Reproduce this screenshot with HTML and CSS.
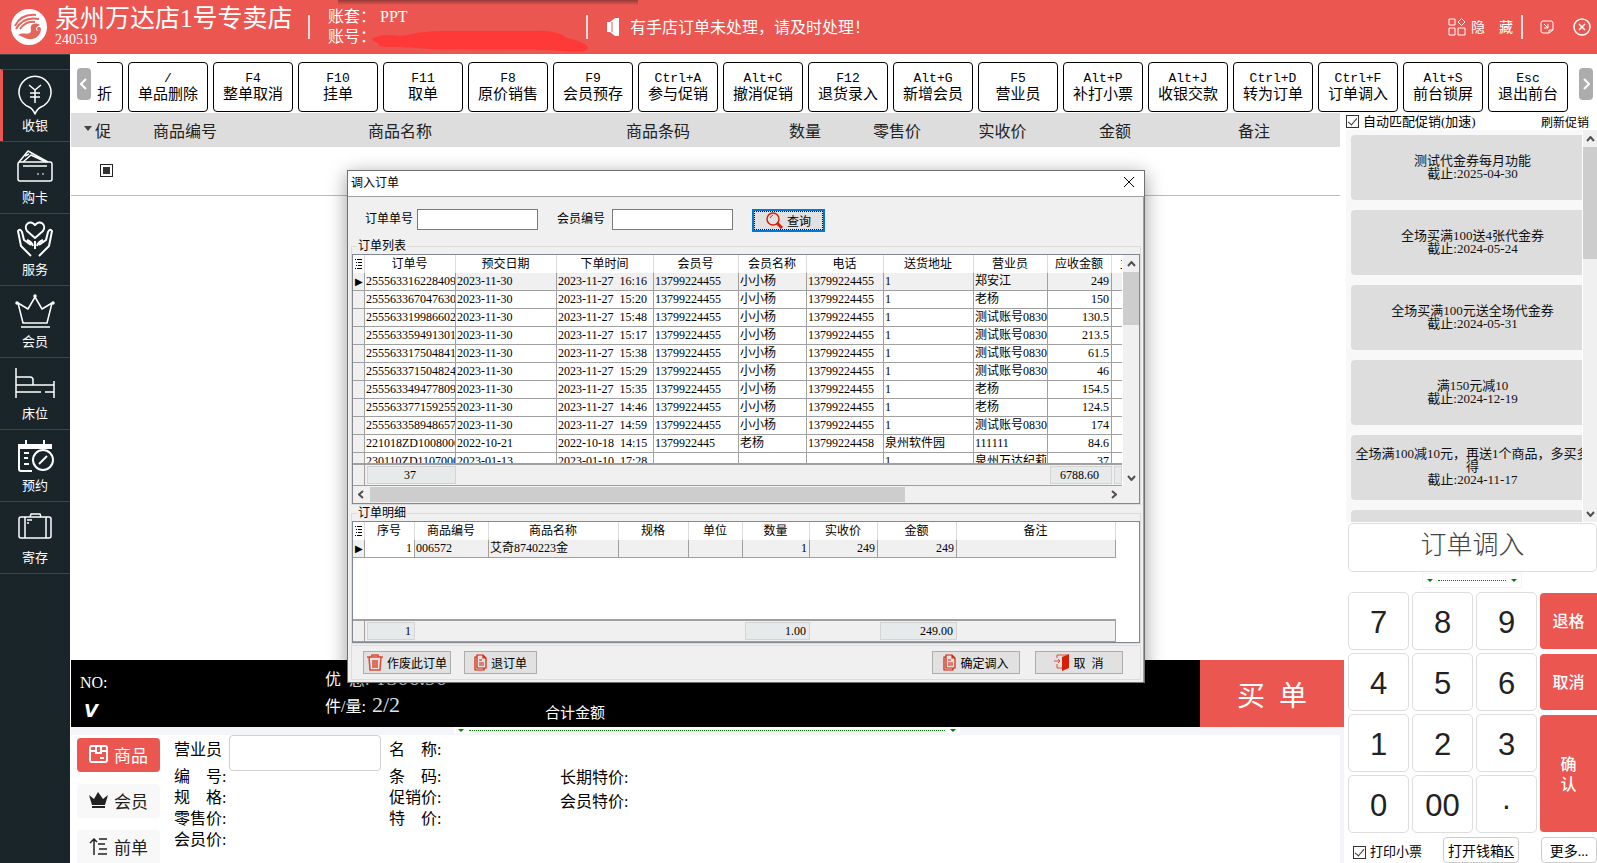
FILE: index.html
```html
<!DOCTYPE html>
<html lang="zh-CN">
  <head>
    <meta charset="UTF-8" />
    <meta name="viewport" content="width=device-width, initial-scale=1.0" />
    <title>前台收银</title>
    <link rel="stylesheet" href="styles.css">
  </head>
  <body>
    <header class="header">
      <svg class="logo" viewBox="0 0 36 36">
        <circle cx="18" cy="18" r="18" fill="#fff" />
        <g fill="none" stroke="#e4655c" stroke-width="2">
          <path d="M4 17C8 9 15 5 25 6" />
          <path d="M5 20C10 11 17 8 28 10" />
          <path d="M9 20C14 13 19 12 24 13" />
        </g>
        <path d="M7 26C12 23 15 26 19 24C21 22 19 20 20 17C22 14 26 14 29 16C27 17 25 18 25 20C25 22 28 23 30 21C29 27 24 31 17 30C12 29 11 27 7 26Z" fill="#e4655c" />
        <circle cx="28" cy="20" r="2" fill="#e4655c" />
      </svg>
      <div class="shop">
        <h1>泉州万达店1号专卖店</h1>
        <p>240519</p>
      </div>
      <div class="account">
        <p>账套： PPT</p>
        <p>账号：</p>
        <svg class="smudge" viewBox="0 0 217 22">
          <path d="M5 7C15 2 28 8 40 4C58 0 80 1 105 1L160 1C180 0 190 3 196 8C208 11 217 14 217 18C216 23 205 22 190 21C150 17 120 21 90 19C60 21 35 16 14 17C6 17 9 14 5 12C0 11 0 8 5 7Z" fill="#ff3838" />
        </svg>
      </div>
      <div class="notice">
        <svg width="12" height="18" viewBox="0 0 12 18"><path d="M0 4h3l5-4h4v18H8l-5-4H0z" fill="#fff" /><path d="M5 4v10" stroke="#eb5651" /></svg>
        <span>有手店订单未处理，请及时处理！</span>
      </div>
      <div class="header-tools">
        <button class="hide-btn">
          <svg width="18" height="18" viewBox="0 0 18 18" fill="none" stroke="currentColor"><path d="M1 1h6v6H1zM1 10h6v7H1zM10 10h7v7h-7zM13.500 .5l3.500 3.500-3.500 3.500L10 4z" /></svg>
          <span>隐</span><span>藏</span>
        </button>
        <button class="icon-btn" aria-label="最小化">
          <svg width="14" height="14" viewBox="0 0 14 14" fill="none" stroke="currentColor"><path d="M9 13H3a2 2 0 0 1-2-2V3a2 2 0 0 1 2-2h8a2 2 0 0 1 2 2v7L9 13V10h4M4 4l4 4M8 4v4H4" /></svg>
        </button>
        <button class="icon-btn" aria-label="关闭">
          <svg width="18" height="18" viewBox="0 0 18 18" fill="none" stroke="currentColor" stroke-width="1.500"><circle cx="9" cy="9" r="8" /><path d="M6 6l6 6M12 6l-6 6" /></svg>
        </button>
      </div>
    </header>

    <div class="app">
      <nav class="sidebar">
        <a href="#" class="active">
          <svg viewBox="0 0 40 40"><path d="M14 32Q18 34 20 39Q22 34 26 32A16 16 0 1 0 14 32Z" /><path d="M14 10l6 5 6-5M15 18h10M15 22h10M20 15v13" /></svg>
          <span>收银</span>
        </a>
        <a href="#">
          <svg viewBox="0 0 40 40"><rect x="3" y="15" width="34" height="19" rx="2" /><path d="M8 19h24M4 15L13 4l20 11M8 15L16 8l15 7M10 9l4-2" /><path d="M22 27h2M27 27h2" stroke-width="1" /></svg>
          <span>购卡</span>
        </a>
        <a href="#">
          <svg viewBox="0 0 40 40" class="bold"><path d="M20 19L12 12C8 6 15 0 20 6C25 0 32 6 28 12Z" /><path d="M16 37L6 27 3 12q2-3 4 1l2 8 7 5M12 21q5 2 6 6M24 37l10-10 3-15q-2-3-4 1l-2 8-7 5M28 21q-5 2-6 6M20 22v8" /></svg>
          <span>服务</span>
        </a>
        <a href="#">
          <svg viewBox="0 0 40 40"><path d="M3 12l5 20h24l5-20-10 6-7-12-7 12zM6 36h29" /><g fill="#fff"><circle cx="20" cy="5" r="1" /><circle cx="2" cy="12" r="1" /><circle cx="38" cy="12" r="1" /></g></svg>
          <span>会员</span>
        </a>
        <a href="#">
          <svg viewBox="0 0 40 40"><path d="M1 5v30M1 14h14q3 0 3 3v5M1 22h38M39 18v17M1 29h25M30 29h9" /></svg>
          <span>床位</span>
        </a>
        <a href="#">
          <svg viewBox="0 0 40 40" class="bold"><path d="M3 9h34v5H3z" fill="#fff" stroke="none" /><path d="M17 36H6q-2 0-2-2V10M11 5v6M29 5v6M9 18h5M9 23h4M9 29h5" /><circle cx="28" cy="25" r="10" fill="#1a252a" /><path d="M24 29l8-8" /></svg>
          <span>预约</span>
        </a>
        <a href="#">
          <svg viewBox="0 0 40 40"><rect x="4" y="10" width="32" height="21" rx="2" /><path d="M15 10l1-3h9l1 3M10 10v21M31 10v21M12 13h5M12 16h2" /></svg>
          <span>寄存</span>
        </a>
      </nav>

      <div class="workspace">
        <div class="toolbar">
          <button class="scroll-btn" aria-label="向左"><svg width="8" height="12" viewBox="0 0 8 12"><path d="M6 1L1 6l5 5" /></svg></button>
          <div class="shortcuts">
            <button class="cut">折</button>
            <button><kbd>/</kbd>单品删除</button>
            <button><kbd>F4</kbd>整单取消</button>
            <button><kbd>F10</kbd>挂单</button>
            <button><kbd>F11</kbd>取单</button>
            <button><kbd>F8</kbd>原价销售</button>
            <button><kbd>F9</kbd>会员预存</button>
            <button><kbd>Ctrl+A</kbd>参与促销</button>
            <button><kbd>Alt+C</kbd>撤消促销</button>
            <button><kbd>F12</kbd>退货录入</button>
            <button><kbd>Alt+G</kbd>新增会员</button>
            <button><kbd>F5</kbd>营业员</button>
            <button><kbd>Alt+P</kbd>补打小票</button>
            <button><kbd>Alt+J</kbd>收银交款</button>
            <button><kbd>Ctrl+D</kbd>转为订单</button>
            <button><kbd>Ctrl+F</kbd>订单调入</button>
            <button><kbd>Alt+S</kbd>前台锁屏</button>
            <button><kbd>Esc</kbd>退出前台</button>
          </div>
          <button class="scroll-btn" aria-label="向右"><svg width="8" height="12" viewBox="0 0 8 12"><path d="M2 1l5 5-5 5" /></svg></button>
        </div>

        <div class="columns">
          <main class="main">
            <div class="goods">
              <table class="goods-table">
                <colgroup>
                  <col class="w56"><col class="w116"><col class="w314"><col class="w202"><col class="w92"><col class="w92"><col class="w119"><col class="w106"><col>
                </colgroup>
                <thead>
                  <tr>
                    <th class="promo-col"><svg width="8" height="5" viewBox="0 0 8 5"><path d="M0 0h8L4 5z" fill="#444" /></svg>促</th>
                    <th>商品编号</th>
                    <th>商品名称</th>
                    <th>商品条码</th>
                    <th>数量</th>
                    <th>零售价</th>
                    <th>实收价</th>
                    <th>金额</th>
                    <th>备注</th>
                  </tr>
                </thead>
                <tbody>
                  <tr>
                    <td class="mark"><span></span></td>
                    <td></td><td></td><td></td><td></td><td></td><td></td><td></td><td></td>
                  </tr>
                </tbody>
              </table>
            </div>

            <div class="totals">
              <div class="totals-info">
                <div class="bill-no">
                  <p>NO:</p>
                  <p class="vip">V</p>
                </div>
                <div class="sums">
                  <p>优&ensp;惠:<b>¥306.90</b></p>
                  <p>件/量:<b>2/2</b></p>
                </div>
                <p class="total-label">合计金额</p>
              </div>
              <button class="pay">买&ensp;单</button>
            </div>

            <div class="splitter"><div class="grip"><i></i><span></span><i></i></div></div>

            <div class="detail">
              <div class="tabs">
                <button class="on">
                  <svg width="19" height="18" viewBox="0 0 19 18" fill="none" stroke="currentColor" stroke-width="2"><path d="M1 3q0-2 2-2h13q2 0 2 2v12q0 2-2 2H3q-2 0-2-2zM7 1v7h5V1M1 6h5M13 6h5M11 13h4" /></svg>
                  商品
                </button>
                <button>
                  <svg width="19" height="18" viewBox="0 0 19 18"><path d="M0 4l5 4 4-7 5 7 5-4-3 10H3zM3 15h13v2H3z" fill="#222" /></svg>
                  会员
                </button>
                <button>
                  <svg width="19" height="18" viewBox="0 0 19 18" fill="none" stroke="#222" stroke-width="1.500"><path d="M5 18V2M1 6l4-4 3 3M10 2h8M9 7h7M10 12h8M9 17h9" /></svg>
                  前单
                </button>
              </div>
              <div class="info info-a">
                <div class="clerk">
                  <label for="clerk">营业员</label>
                  <input id="clerk" type="text">
                </div>
                <p>编　号:</p>
                <p>规　格:</p>
                <p>零售价:</p>
                <p>会员价:</p>
              </div>
              <div class="info info-b">
                <p>名　称:</p>
                <p>条　码:</p>
                <p>促销价:</p>
                <p>特　价:</p>
              </div>
              <div class="info info-c">
                <p>长期特价:</p>
                <p>会员特价:</p>
              </div>
            </div>
          </main>

          <aside class="side">
            <div class="promo-head">
              <label><input type="checkbox" class="check" checked>自动匹配促销(加速)</label>
              <a href="#">刷新促销</a>
            </div>
            <div class="promo-list">
              <div class="promo-cards">
                <button>测试代金券每月功能<br>截止:2025-04-30</button>
                <button>全场买满100送4张代金券<br>截止:2024-05-24</button>
                <button>全场买满100元送全场代金券<br>截止:2024-05-31</button>
                <button>满150元减10<br>截止:2024-12-19</button>
                <button>全场满100减10元，再送1个商品，多买多得<br>截止:2024-11-17</button>
                <button></button>
              </div>
              <div class="vbar">
                <svg viewBox="0 0 9 6"><path d="M1 5l3.500-4L8 5" /></svg>
                <div class="thumb promo-thumb"></div>
                <svg class="last" viewBox="0 0 9 6"><path d="M1 1l3.500 4L8 1" /></svg>
              </div>
            </div>
            <button class="mode">订单调入</button>
            <div class="grip small"><i></i><span></span><i></i></div>
            <div class="keypad">
              <button>7</button><button>8</button><button>9</button><button class="red">退格</button>
              <button>4</button><button>5</button><button>6</button><button class="red">取消</button>
              <button>1</button><button>2</button><button>3</button><button class="red tall">确<br>认</button>
              <button>0</button><button>00</button><button>·</button>
            </div>
            <div class="side-foot">
              <label><input type="checkbox" class="check" checked>打印小票</label>
              <button>打开钱箱<u>K</u></button>
              <button class="more">更多...</button>
            </div>
          </aside>
        </div>
      </div>
    </div>

    <div class="dialog" role="dialog" aria-label="调入订单">
      <div class="dialog-title">
        <h2>调入订单</h2>
        <button aria-label="关闭"><svg width="12" height="12" viewBox="0 0 12 12"><path d="M1 1l10 10M11 1L1 11" stroke="#000" /></svg></button>
      </div>
      <div class="dialog-body">
        <form class="search">
          <label for="order-no">订单单号</label>
          <input id="order-no" type="text">
          <label for="member-no" class="member">会员编号</label>
          <input id="member-no" type="text">
          <button type="button" class="btn focus">
            <svg width="17" height="17" viewBox="0 0 17 17" fill="none" stroke="#d81e06"><circle cx="7" cy="7" r="6" stroke-width="1.500" /><path d="M4 6q1-2 3-3" /><path d="M11 11l5 5" stroke-width="3" /></svg>
            查询
          </button>
        </form>

        <fieldset>
          <legend>订单列表</legend>
          <div class="frame orders">
            <div class="orders-view">
              <div class="orders-rows">
                <table class="data">
                  <colgroup><col class="w12"><col class="w91"><col class="w101"><col class="w97"><col class="w85"><col class="w68"><col class="w77"><col class="w90"><col class="w74"><col class="w64"><col></colgroup>
                  <thead>
                    <tr><th class="menu"><svg width="7" height="10" viewBox="0 0 7 10"><path d="M0 .5h1M2 .5h5M1 3.500h1M3 3.500h4M1 6.500h1M3 6.500h4M0 9.500h1M2 9.500h5" stroke="#000" /></svg></th><th>订单号</th><th>预交日期</th><th>下单时间</th><th>会员号</th><th>会员名称</th><th>电话</th><th>送货地址</th><th>营业员</th><th>应收金额</th><th class="part">主</th></tr>
                  </thead>
                  <tbody>
                    <tr class="selected"><td class="arrow">▶</td><td class="current">255563316228409</td><td>2023-11-30</td><td>2023-11-27&ensp;16:16</td><td>13799224455</td><td>小小杨</td><td>13799224455</td><td>1</td><td>郑安江</td><td class="num">249</td><td></td></tr>
                    <tr><td></td><td>255563367047630</td><td>2023-11-30</td><td>2023-11-27&ensp;15:20</td><td>13799224455</td><td>小小杨</td><td>13799224455</td><td>1</td><td>老杨</td><td class="num">150</td><td></td></tr>
                    <tr><td></td><td>255563319986602</td><td>2023-11-30</td><td>2023-11-27&ensp;15:48</td><td>13799224455</td><td>小小杨</td><td>13799224455</td><td>1</td><td>测试账号0830</td><td class="num">130.5</td><td></td></tr>
                    <tr><td></td><td>255563359491301</td><td>2023-11-30</td><td>2023-11-27&ensp;15:17</td><td>13799224455</td><td>小小杨</td><td>13799224455</td><td>1</td><td>测试账号0830</td><td class="num">213.5</td><td></td></tr>
                    <tr><td></td><td>255563317504841</td><td>2023-11-30</td><td>2023-11-27&ensp;15:38</td><td>13799224455</td><td>小小杨</td><td>13799224455</td><td>1</td><td>测试账号0830</td><td class="num">61.5</td><td></td></tr>
                    <tr><td></td><td>255563371504824</td><td>2023-11-30</td><td>2023-11-27&ensp;15:29</td><td>13799224455</td><td>小小杨</td><td>13799224455</td><td>1</td><td>测试账号0830</td><td class="num">46</td><td></td></tr>
                    <tr><td></td><td>255563349477809</td><td>2023-11-30</td><td>2023-11-27&ensp;15:35</td><td>13799224455</td><td>小小杨</td><td>13799224455</td><td>1</td><td>老杨</td><td class="num">154.5</td><td></td></tr>
                    <tr><td></td><td>255563377159255</td><td>2023-11-30</td><td>2023-11-27&ensp;14:46</td><td>13799224455</td><td>小小杨</td><td>13799224455</td><td>1</td><td>老杨</td><td class="num">124.5</td><td></td></tr>
                    <tr><td></td><td>255563358948657</td><td>2023-11-30</td><td>2023-11-27&ensp;14:59</td><td>13799224455</td><td>小小杨</td><td>13799224455</td><td>1</td><td>测试账号0830</td><td class="num">174</td><td></td></tr>
                    <tr><td></td><td>221018ZD1008000</td><td>2022-10-21</td><td>2022-10-18&ensp;14:15</td><td>1379922445</td><td>老杨</td><td>13799224458</td><td>泉州软件园</td><td>111111</td><td class="num">84.6</td><td></td></tr>
                    <tr><td></td><td>230110ZD1107000</td><td>2023-01-13</td><td>2023-01-10&ensp;17:28</td><td></td><td></td><td></td><td>1</td><td>泉州万达纪莉</td><td class="num">37</td><td></td></tr>
                  </tbody>
                </table>
              </div>
              <table class="data sum">
                <colgroup><col class="w12"><col class="w91"><col class="w592"><col class="w64"><col></colgroup>
                <tbody>
                  <tr><td></td><td><span class="center">37</span></td><td></td><td><span class="center">6788.60</span></td><td><span></span></td></tr>
                </tbody>
              </table>
            </div>
            <div class="vbar">
              <svg viewBox="0 0 9 6"><path d="M1 5l3.500-4L8 5" /></svg>
              <div class="thumb orders-thumb"></div>
              <svg class="last" viewBox="0 0 9 6"><path d="M1 1l3.500 4L8 1" /></svg>
            </div>
            <div class="hbar">
              <svg viewBox="0 0 6 9"><path d="M5 1L1 4.500 5 8" /></svg>
              <div class="thumb wide-thumb"></div>
              <svg class="last" viewBox="0 0 6 9"><path d="M1 1l4 3.500L1 8" /></svg>
            </div>
          </div>
        </fieldset>

        <fieldset>
          <legend>订单明细</legend>
          <div class="frame lines">
            <table class="data">
              <colgroup><col class="w12"><col class="w50"><col class="w74"><col class="w130"><col class="w70"><col class="w54"><col class="w67"><col class="w68"><col class="w79"><col></colgroup>
              <thead>
                <tr><th class="menu"><svg width="7" height="10" viewBox="0 0 7 10"><path d="M0 .5h1M2 .5h5M1 3.500h1M3 3.500h4M1 6.500h1M3 6.500h4M0 9.500h1M2 9.500h5" stroke="#000" /></svg></th><th>序号</th><th>商品编号</th><th>商品名称</th><th>规格</th><th>单位</th><th>数量</th><th>实收价</th><th>金额</th><th>备注</th></tr>
              </thead>
              <tbody>
                <tr class="selected"><td class="arrow">▶</td><td class="num current">1</td><td>006572</td><td>艾奇8740223金</td><td></td><td></td><td class="num">1</td><td class="num">249</td><td class="num">249</td><td></td></tr>
              </tbody>
            </table>
            <table class="data sum">
              <colgroup><col class="w12"><col class="w50"><col class="w328"><col class="w67"><col class="w68"><col class="w79"><col></colgroup>
              <tbody>
                <tr><td></td><td><span>1</span></td><td></td><td><span>1.00</span></td><td></td><td><span>249.00</span></td><td></td></tr>
              </tbody>
            </table>
          </div>
        </fieldset>

        <div class="actions">
          <button class="btn">
            <svg width="16" height="17" viewBox="0 0 16 17" fill="none" stroke="#dc4a35" stroke-width="1.500"><path d="M0 3h16M4 3l1-2h6l1 2M2 3l1 13h10l1-13M6 6v8M8 6v8M10 6v8" /></svg>
            作废此订单
          </button>
          <button class="btn narrow">
            <svg width="13" height="17" viewBox="0 0 13 17" fill="none" stroke="#d81e06" stroke-width="1.200"><path d="M3 1h6l3 3v10H3zM9 1v3h3M3 3H1v13h9v-2M5 6h3M5 9h5M5 11h5" /></svg>
            退订单
          </button>
          <button class="btn confirm">
            <svg width="13" height="17" viewBox="0 0 13 17" fill="none" stroke="#d81e06" stroke-width="1.200"><path d="M3 1h6l3 3v10H3zM9 1v3h3M3 3H1v13h9v-2M5 6h3M5 9h5M5 11h5" /></svg>
            确定调入
          </button>
          <button class="btn">
            <svg width="15" height="17" viewBox="0 0 15 17"><path d="M8 3l7-3v14l-7 3z" fill="#d81e06" /><path d="M3 4V1h11M3 10v4h5M0 7h6M4 5l2 2-2 2" fill="none" stroke="#dc4a35" /></svg>
            取&ensp;消
          </button>
        </div>
      </div>
    </div>
  </body>
</html>
```

FILE: styles.css
```css
* {
  box-sizing: border-box;
}

body {
  margin: 0;
  height: 100vh;
  overflow: hidden;
  display: flex;
  flex-direction: column;
  background-color: #fff;
  color: #000;
  font-family: "Liberation Serif", "Noto Sans CJK SC", serif;
  font-size: 12px;
}

h1,
h2,
p {
  margin: 0;
  font-weight: normal;
}

button,
input {
  font-family: inherit;
  font-size: inherit;
  color: inherit;
  margin: 0;
}

button {
  padding: 0;
  border: none;
  background: none;
  cursor: pointer;
}

a {
  color: inherit;
  text-decoration: none;
}

svg {
  flex: none;
}

/* Top bar */
.header {
  height: 54px;
  flex: none;
  display: flex;
  align-items: center;
  padding: 0 6px 0 11px;
  background: linear-gradient(rgba(60, 30, 30, 0.5), rgba(60, 30, 30, 0)) 338px 0 / 300px 5px no-repeat #eb5651;
  color: #fff;
}

.logo {
  width: 36px;
  height: 36px;
}

.shop {
  width: 263px;
  padding-left: 8px;
  border-right: 2px solid #fbdcda;
  height: 24px;
  display: flex;
  flex-direction: column;
  justify-content: center;
  white-space: nowrap;
}

.shop h1 {
  font-size: 25px;
  line-height: 26px;
}

.shop p {
  font-size: 14px;
  line-height: 16px;
}

.account {
  position: relative;
  width: 278px;
  height: 24px;
  padding-left: 18px;
  border-right: 2px solid #fbdcda;
  display: flex;
  flex-direction: column;
  justify-content: center;
  font-size: 16px;
  line-height: 20px;
}

.account p {
  flex: none;
}

/* Painted over the account number */
.smudge {
  position: absolute;
  left: 61px;
  top: 15px;
  width: 217px;
  height: 22px;
}

.notice {
  display: flex;
  align-items: center;
  gap: 11px;
  padding-left: 19px;
  font-size: 16px;
}

.notice span {
  padding-bottom: 3px;
}

.header-tools {
  margin-left: auto;
  display: flex;
  align-items: center;
  gap: 17px;
}

.hide-btn {
  display: flex;
  align-items: center;
  height: 24px;
  padding-right: 8px;
  border-right: 2px solid #fbdcda;
  font-size: 14px;
}

.hide-btn span {
  padding-bottom: 2px;
}

.hide-btn span:first-of-type {
  margin: 0 14px 0 5px;
}

.icon-btn {
  display: flex;
}

.icon-btn:last-child {
  margin-left: 2px;
}

/* Left navigation */
.app {
  flex: 1;
  min-height: 0;
  display: flex;
}

.sidebar {
  width: 70px;
  flex: none;
  padding-top: 14px;
  background-color: #1a252a;
  border-top: 1px solid #39464b;
  color: #fff;
}

.sidebar a {
  height: 72px;
  display: flex;
  flex-direction: column;
  align-items: center;
  padding-top: 5px;
  border-top: 1px solid #39464b;
}

.sidebar a:last-child {
  height: 73px;
  border-bottom: 1px solid #39464b;
}

.sidebar .active {
  border-left: 3px solid #eb5651;
  padding-right: 3px;
}

.sidebar svg {
  width: 40px;
  height: 40px;
  fill: none;
  stroke: #fff;
  stroke-width: 1.5;
  stroke-linejoin: round;
}

.sidebar .bold {
  stroke-width: 2;
}

.sidebar span {
  font-size: 13px;
  line-height: 22px;
}

.workspace {
  flex: 1;
  min-width: 0;
  display: flex;
  flex-direction: column;
  padding-left: 1px;
}

/* Shortcut buttons */
.toolbar {
  flex: none;
  display: flex;
  padding: 8px 4px 1px 6px;
}

.scroll-btn {
  width: 14px;
  height: 32px;
  margin-top: 6px;
  flex: none;
  border-radius: 4px;
  background-color: #acacac;
  display: flex;
  align-items: center;
  justify-content: center;
}

.scroll-btn path {
  fill: none;
  stroke: #fff;
  stroke-width: 2;
}

.shortcuts {
  flex: 1;
  min-width: 0;
  display: flex;
  justify-content: flex-end;
  gap: 5px;
  overflow: hidden;
  margin: 0 11px 0 6px;
}

.shortcuts button {
  width: 80px;
  height: 50px;
  flex: none;
  border: 1px solid #000;
  border-radius: 4px;
  background-color: #fff;
  font-size: 15px;
  line-height: 16px;
}

.shortcuts kbd {
  display: block;
  font-family: "Liberation Mono", monospace;
  font-size: 13px;
  line-height: 14px;
}

.shortcuts .cut {
  padding: 14px 10px 0 0;
  text-align: right;
}

.columns {
  flex: 1;
  min-height: 0;
  display: flex;
  gap: 2px;
}

.main {
  flex: 1;
  min-width: 0;
  display: flex;
  flex-direction: column;
}

/* Cart */
.goods {
  flex: 1;
  min-height: 0;
  padding-right: 4px;
}

.goods-table {
  width: 100%;
  table-layout: fixed;
  border-collapse: collapse;
  font-family: "Noto Sans CJK SC", sans-serif;
}

.goods-table th {
  height: 34px;
  padding: 0;
  background-color: #ddd;
  color: #222;
  font-size: 16px;
  font-weight: normal;
  line-height: 20px;
}

.goods-table .promo-col {
  text-align: left;
  padding-left: 13px;
}

.promo-col svg {
  margin-right: 3px;
  vertical-align: 6px;
}

.goods-table td {
  height: 48px;
  padding: 0;
  border-bottom: 1px solid #bbb;
}

.goods-table .mark {
  padding-left: 29px;
}

.mark span {
  display: block;
  width: 13px;
  height: 13px;
  border: 1px solid #222;
  padding: 2px;
  background-color: #333;
  background-clip: content-box;
}

/* Bill totals */
.totals {
  flex: none;
  display: flex;
  height: 67px;
}

.totals-info {
  flex: 1;
  display: flex;
  padding-left: 9px;
  background-color: #000;
  color: #fff;
  font-size: 16px;
}

.bill-no {
  width: 245px;
  padding-top: 10px;
  line-height: 26px;
}

.bill-no .vip {
  padding-left: 4px;
  font: italic bold 18px/30px "DejaVu Sans", sans-serif;
}

.sums {
  width: 220px;
  padding-top: 7px;
  white-space: nowrap;
}

.sums p {
  height: 27px;
  line-height: 26px;
}

.sums b {
  padding-left: 6px;
  font-size: 22px;
  font-weight: normal;
  line-height: 22px;
  color: #dde6ee;
}

.total-label {
  padding-top: 42px;
  font-size: 15px;
  line-height: 22px;
}

.pay {
  width: 144px;
  background-color: #eb5651;
  color: #fff;
  font-size: 28px;
}

.splitter {
  flex: none;
  height: 8px;
  padding-left: 383px;
  background-color: #f4f5f8;
}

.grip {
  display: flex;
  align-items: center;
  gap: 5px;
  width: 506px;
  height: 6px;
  padding: 0 4px;
  background-color: #fff;
}

.grip i {
  border: 3px solid transparent;
  border-top-color: green;
  border-bottom: none;
}

.grip span {
  flex: 1;
  border-top: 1px dotted green;
}

.grip.small {
  flex: none;
  width: 100px;
  height: 15px;
  margin: 1px 0 4px 76px;
  border: 1px solid #f4f4f4;
}

/* Item details */
.detail {
  flex: none;
  display: flex;
  height: 128px;
  padding-left: 6px;
  border-right: 4px solid #f4f5f8;
}

.tabs {
  width: 83px;
  flex: none;
  padding-top: 3px;
  display: flex;
  flex-direction: column;
  gap: 12px;
}

.tabs button {
  height: 34px;
  flex: none;
  display: flex;
  align-items: center;
  justify-content: center;
  gap: 6px;
  padding-bottom: 2px;
  border-radius: 4px;
  background-color: #f8f8f8;
  color: #222;
  font-family: "Noto Sans CJK SC", sans-serif;
  font-size: 17px;
}

.tabs .on {
  background-color: #eb5651;
  color: #fff;
}

.info {
  font-size: 16px;
  line-height: 21px;
  white-space: nowrap;
}

.info-a {
  width: 214px;
  padding-left: 14px;
}

.clerk {
  display: flex;
  height: 31px;
}

.clerk label {
  width: 52px;
  flex: none;
  padding-top: 4px;
}

.clerk input {
  width: 152px;
  height: 36px;
  flex: none;
  margin-left: 3px;
  border: 1px solid #d0d0d0;
  border-radius: 4px;
}

.info-b {
  width: 186px;
  padding-left: 15px;
}

.info-b p:first-child {
  padding: 4px 0 6px;
}

.info-c {
  padding-top: 31px;
  line-height: 24px;
}

/* Right column */
.side {
  width: 251px;
  flex: none;
  display: flex;
  flex-direction: column;
}

.promo-head,
.side-foot {
  flex: none;
  display: flex;
  align-items: center;
  white-space: nowrap;
}

.promo-head {
  height: 17px;
  justify-content: space-between;
  padding-right: 8px;
}

.promo-head label,
.side-foot label {
  display: flex;
  align-items: center;
  gap: 4px;
  font-size: 13px;
  line-height: 16px;
}

.check {
  appearance: none;
  width: 13px;
  height: 13px;
  flex: none;
  border: 1px solid #333;
  background-color: #fff;
  display: flex;
  justify-content: center;
}

.check:checked::before {
  content: "";
  width: 4px;
  height: 8px;
  border: solid #333;
  border-width: 0 1px 1px 0;
  transform: rotate(40deg);
}

.promo-list {
  flex: 1;
  min-height: 0;
  display: flex;
  overflow: hidden;
  margin-bottom: 1px;
}

.promo-cards {
  flex: 1;
  min-width: 0;
  overflow: hidden;
  display: flex;
  flex-direction: column;
  gap: 10px;
  padding: 5px 0 0 5px;
  background-color: #f8f8f8;
}

.promo-cards button {
  width: 243px;
  height: 65px;
  flex: none;
  padding-bottom: 2px;
  border-radius: 4px;
  background-color: #ddd;
  color: #111;
  font-size: 13px;
  line-height: 13px;
}

.vbar,
.hbar {
  display: flex;
  align-items: center;
  background-color: #f0f0f0;
}

.vbar {
  width: 15px;
  flex: none;
  flex-direction: column;
  border-left: 1px solid #fff;
}

.vbar svg {
  width: 9px;
  height: 6px;
  margin: 6px 0 5px;
}

.vbar svg,
.hbar svg {
  fill: none;
  stroke: #505050;
  stroke-width: 2;
}

.vbar .last {
  margin-top: auto;
}

.thumb {
  background-color: #cdcdcd;
}

.vbar .thumb {
  width: 100%;
}

.promo-thumb {
  height: 112px;
}

.mode {
  height: 49px;
  flex: none;
  margin-left: 2px;
  padding-bottom: 3px;
  border: 1px solid #ddd;
  border-radius: 5px;
  font-size: 26px;
  font-weight: 300;
  line-height: 36px;
  color: #444;
}

.keypad {
  flex: none;
  display: grid;
  grid-template-columns: 61px 61px 61px 1fr;
  grid-auto-rows: 58px;
  gap: 3px;
  padding-left: 2px;
}

.keypad button {
  padding-top: 4px;
  border: 1px solid #ddd;
  border-radius: 5px;
  background-color: #fff;
  color: #222;
  font-family: "Liberation Sans", sans-serif;
  font-size: 31px;
}

.keypad .red {
  margin: 1px 0;
  padding: 0 0 2px;
  border: none;
  border-radius: 4px 0 0 4px;
  background-color: #eb5651;
  color: #fff;
  font-family: "Noto Sans CJK SC", sans-serif;
  font-size: 16px;
  font-weight: 500;
  line-height: 20px;
}

.keypad .tall {
  grid-row: span 2;
}

.side-foot {
  height: 30px;
  padding-left: 7px;
  align-items: flex-end;
}

.side-foot label {
  width: 90px;
  padding-bottom: 3px;
}

.side-foot button {
  width: 76px;
  height: 26px;
  flex: none;
  border: 1px solid #ccc;
  border-radius: 4px;
  font-size: 14px;
}

.side-foot .more {
  width: 56px;
  margin-left: 22px;
}

/* Order import window */
.dialog {
  position: absolute;
  left: 347px;
  top: 170px;
  width: 798px;
  border: 1px solid #707070;
  background-color: #f0f0f0;
  box-shadow: 0 4px 18px rgba(0, 0, 0, 0.4);
}

.dialog-title {
  height: 26px;
  display: flex;
  align-items: center;
  justify-content: space-between;
  padding: 0 9px 3px 3px;
  background-color: #fff;
  border-bottom: 1px solid #a0a0a0;
}

.dialog-title h2 {
  font-size: 12px;
}

.dialog-title button {
  display: flex;
}

.dialog-body {
  padding: 0 2px 2px 3px;
  border-right: 1px solid #a0a0a0;
}

.search {
  display: flex;
  padding: 12px 0 7px 14px;
}

.search label {
  width: 52px;
  line-height: 21px;
}

.search .member {
  width: 55px;
}

.search input {
  width: 121px;
  height: 21px;
  margin-right: 19px;
  border: 1px solid #7a7a7a;
  background-color: #fff;
}

.btn {
  width: 88px;
  height: 23px;
  display: flex;
  align-items: center;
  justify-content: center;
  gap: 4px;
  border: 1px solid #adadad;
  background-color: #e1e1e1;
  white-space: nowrap;
}

.btn.narrow,
.btn.focus {
  width: 73px;
}

.btn.focus {
  border: 2px solid #0078d7;
  outline: 1px dotted #000;
  outline-offset: -3px;
}

fieldset {
  min-width: 0;
  margin: 0 0 1px;
  padding: 0;
  border: 1px solid #dcdcdc;
}

legend {
  margin-left: 5px;
  padding: 0 1px;
  line-height: 15px;
}

.frame {
  border: 1px solid #828790;
  background-color: #fff;
}

.orders {
  display: grid;
  grid-template-columns: 1fr 17px;
}

.orders-view {
  min-width: 0;
}

.orders-rows {
  height: 208px;
  overflow: hidden;
}

.data {
  width: 100%;
  table-layout: fixed;
  border-collapse: separate;
  border-spacing: 0;
}

.data th,
.data td {
  height: 18px;
  padding: 0 2px 0 1px;
  overflow: hidden;
  white-space: nowrap;
  font-weight: normal;
  line-height: 17px;
}

.data th {
  border-right: 1px solid #dcdcdc;
}

.data th.menu {
  padding: 0;
}

.data th.part {
  padding-left: 8px;
  text-align: left;
}

.menu svg {
  display: block;
  margin: auto;
}

.data td {
  border-right: 1px solid #a0a0a0;
  border-bottom: 1px solid #a0a0a0;
}

.data td:first-child,
.data .selected td {
  background-color: #f0f0f0;
}

.data .selected .current {
  background-color: #fff;
}

.data .num {
  text-align: right;
}

.data .arrow {
  padding: 0 0 0 2px;
  font-family: "DejaVu Sans", sans-serif;
  font-size: 10px;
}

.orders .data th:last-child,
.orders .data td:last-child {
  border-right: none;
}

.sum {
  border-top: 2px solid #a0a0a0;
  background-color: #f0f0f0;
}

.data.sum td {
  height: 21px;
  padding: 1px 0 1px 2px;
  border-right: none;
}

.data.sum td:first-child {
  border-right: 1px solid #a0a0a0;
}

.sum span {
  display: block;
  height: 18px;
  padding-right: 3px;
  border: 1px solid #d4d4d4;
  background-color: #e6eaeb;
  line-height: 16px;
  text-align: right;
}

.sum .center {
  text-align: center;
}

.orders .vbar {
  width: 17px;
}

.orders-thumb {
  height: 53px;
}

.hbar {
  height: 17px;
  padding-right: 5px;
}

.hbar svg {
  width: 6px;
  height: 9px;
  margin: 0 6px 0 5px;
}

.hbar .last {
  margin: 0 0 0 auto;
}

.hbar .thumb {
  height: 15px;
}

.wide-thumb {
  width: 70%;
}

/* corner under the vertical scroll bar */
.orders::after {
  content: "";
  background-color: #f0f0f0;
}

.lines {
  height: 122px;
  display: flex;
  flex-direction: column;
  justify-content: space-between;
}

.lines .data {
  width: calc(100% - 23px);
}

.lines .sum td:last-child {
  border-right: 1px solid #a0a0a0;
}

.actions {
  display: flex;
  gap: 13px;
  padding: 5px 17px 5px 11px;
  border: 1px solid #dcdcdc;
}

.actions .confirm {
  margin-left: auto;
  margin-right: 2px;
}

/* Column widths */
.w12 { width: 12px; }
.w50 { width: 50px; }
.w54 { width: 54px; }
.w56 { width: 56px; }
.w64 { width: 64px; }
.w67 { width: 67px; }
.w68 { width: 68px; }
.w70 { width: 70px; }
.w74 { width: 74px; }
.w77 { width: 77px; }
.w79 { width: 79px; }
.w85 { width: 85px; }
.w90 { width: 90px; }
.w91 { width: 91px; }
.w92 { width: 92px; }
.w97 { width: 97px; }
.w101 { width: 101px; }
.w106 { width: 106px; }
.w116 { width: 116px; }
.w119 { width: 119px; }
.w130 { width: 130px; }
.w202 { width: 202px; }
.w314 { width: 314px; }
.w328 { width: 328px; }
.w592 { width: 592px; }
```
